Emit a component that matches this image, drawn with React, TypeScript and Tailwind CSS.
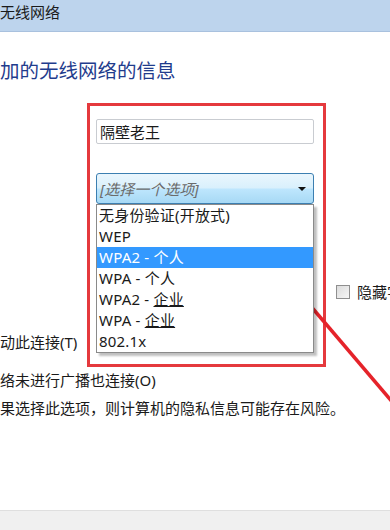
const ui = { fontFamily: '"Noto Sans", "Noto Sans CJK SC", sans-serif' };

const options = [
  { label: "无身份验证(开放式)" },
  { label: "WEP" },
  { label: "WPA2 - 个人", active: true },
  { label: "WPA - 个人" },
  { label: "WPA2 - ", u: "企业" },
  { label: "WPA - ", u: "企业" },
  { label: "802.1x" },
];

export default function App() {
  return (
    <div
      className="relative flex h-[530px] w-[390px] flex-col overflow-hidden bg-white text-[#1a1a1a]"
      style={ui}
    >
      <div className="h-[32px] shrink-0 border-b border-[#a9c1de] bg-[#bdd4ed] pl-0 pt-[2px] text-[15px] leading-[20px]">
        无线网络
      </div>

      <h1 className="mt-[26px] whitespace-nowrap text-[19.5px] leading-[26px] text-[#1f3c8d]">
        加的无线网络的信息
      </h1>

      <div className="ml-[96px] mt-[35px] flex h-[25px] w-[218px] items-center rounded-[2px] border border-[#c9ccd1] bg-white pl-[3px] text-[15px] leading-[20px]">
        隔壁老王
      </div>

      <div className="relative ml-[96px] mt-[29px] w-[218px]">
        <div className="flex h-[31px] items-center justify-between rounded-[3px] border border-[#3c7fb1] bg-[linear-gradient(#eaf6fd_0%,#d9f0fc_48%,#bee6fd_52%,#a7d9f5_100%)] pl-[3px] pr-[7px]">
          <span className="text-[15px] italic leading-[20px] text-[#6b6b6b]">[选择一个选项]</span>
          <span className="h-0 w-0 border-l-[4px] border-r-[4px] border-t-[4px] border-l-transparent border-r-transparent border-t-[#111]" />
        </div>
        <ul className="absolute left-0 top-full z-10 w-[218px] border border-[#8a8a8a] bg-white shadow-[3px_3px_2px_rgba(0,0,0,0.25)]">
          {options.map((o) => (
            <li
              key={o.label + (o.u ?? "")}
              className={
                "h-[21px] whitespace-nowrap pl-[2px] text-[15px] leading-[21px] tracking-[0.2px] " +
                (o.active ? "bg-[#3399ff] text-white" : "text-[#1a1a1a]")
              }
            >
              {o.label}
              {o.u && <span className="underline">{o.u}</span>}
            </li>
          ))}
        </ul>
      </div>

      <div className="ml-[336px] mt-[80px] flex h-[15px] items-center gap-[7px] whitespace-nowrap text-[15px] leading-[20px]">
        <span className="h-[14px] w-[14px] shrink-0 border border-[#8f8f8f] bg-[linear-gradient(135deg,#dcdcdc,#f6f6f6)]" />
        <span>隐藏字符</span>
      </div>

      <div className="mt-[33px] whitespace-nowrap text-[15px] leading-[20px]">动此连接(T)</div>
      <div className="mt-[18px] whitespace-nowrap text-[15px] leading-[20px]">络未进行广播也连接(O)</div>
      <div className="mt-[8px] whitespace-nowrap text-[15px] leading-[20px]">
        果选择此选项，则计算机的隐私信息可能存在风险。
      </div>

      <div className="flex-1" />
      <div className="h-[20px] shrink-0 border-t border-[#dfdfdf] bg-[#f0f0f0]" />

      <div className="pointer-events-none absolute left-[87px] top-[103px] h-[264px] w-[239px] border-[3px] border-[#e5393d]" />

      <svg className="pointer-events-none absolute left-0 top-0" width="390" height="530" viewBox="0 0 390 530">
        <line x1="400" y1="411" x2="280" y2="270" stroke="#e5232a" strokeWidth="3.5" />
        <polygon points="268,258 290,265 276,279" fill="#e5232a" />
      </svg>
    </div>
  );
}
